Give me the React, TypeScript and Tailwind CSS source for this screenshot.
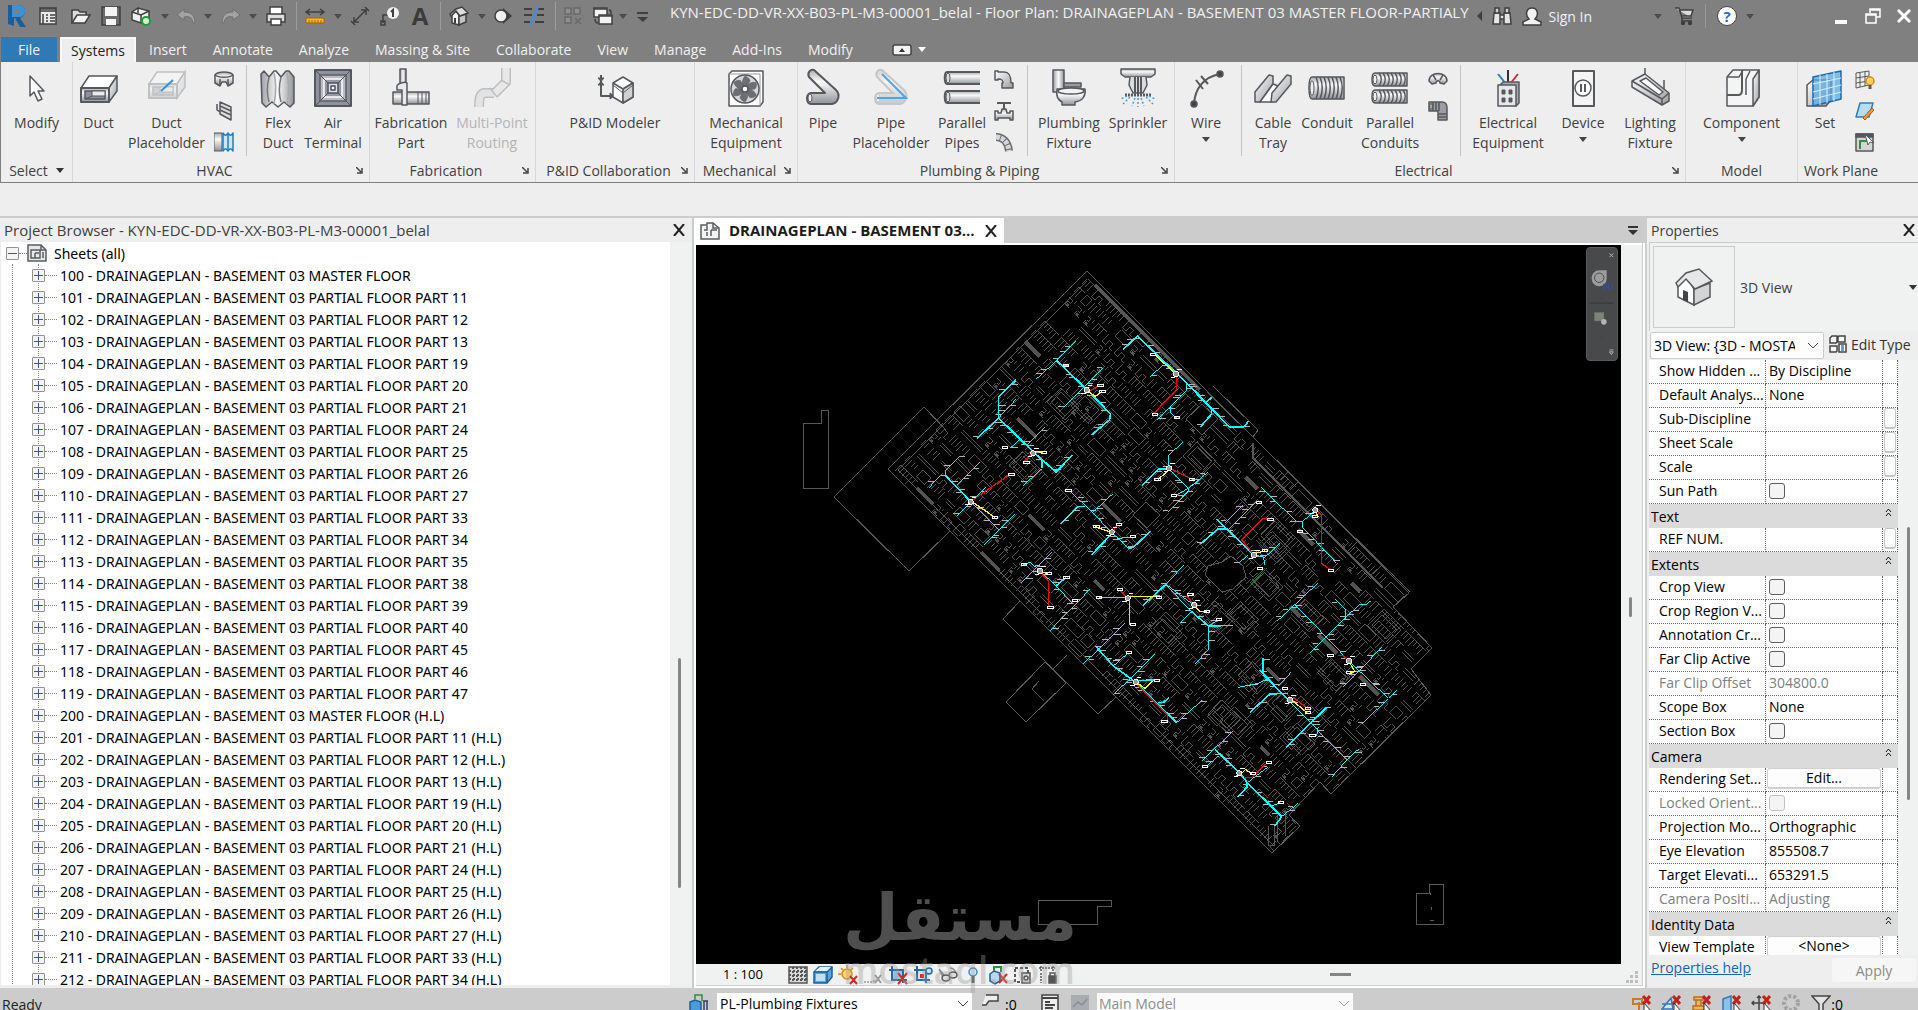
import { useState, type ReactNode } from "react";
import clsx from "clsx";

const Defs = () => (
  <svg className="absolute h-0 w-0" aria-hidden="true">
    <defs>
      <linearGradient id="metal" x1="0" y1="0" x2="0" y2="1">
        <stop offset="0" stopColor="#a9acb0" />
        <stop offset=".35" stopColor="#fafafa" />
        <stop offset="1" stopColor="#8f9398" />
      </linearGradient>
      <linearGradient id="metalH" x1="0" y1="0" x2="1" y2="0">
        <stop offset="0" stopColor="#9da1a6" />
        <stop offset=".5" stopColor="#fafafa" />
        <stop offset="1" stopColor="#8f9398" />
      </linearGradient>
      <linearGradient id="side" x1="0" y1="0" x2="1" y2="1">
        <stop offset="0" stopColor="#ffffff" />
        <stop offset="1" stopColor="#9b9ea3" />
      </linearGradient>
    </defs>
  </svg>
);

type IconProps = { children: ReactNode; size?: 20 | 40; dim?: boolean };

const Icon = ({ children, size = 40, dim }: IconProps) => (
  <svg
    viewBox={size === 40 ? "0 0 40 40" : "0 0 20 20"}
    className={clsx("shrink-0", size === 40 ? "h-10 w-10" : "h-5 w-5", dim && "opacity-50")}
    fill="none"
    stroke="#55585d"
    strokeWidth="1.5"
    strokeLinejoin="round"
    aria-hidden="true"
  >
    {children}
  </svg>
);

const Caret = ({ className = "text-[#444]" }: { className?: string }) => (
  <svg viewBox="0 0 8 5" className={clsx("h-[5px] w-2 shrink-0", className)} fill="currentColor" aria-hidden="true">
    <path d="M0 0h8L4 5z" />
  </svg>
);

/* ---------- large ribbon icons ---------- */

const ModifyIcon = () => (
  <Icon>
    <path d="M13 8v20l4-4 4 9 4-2-4-8h6z" fill="#fff" />
  </Icon>
);
const DuctBox = () => (
  <>
    <path d="M2 20l8-12h28l-8 12z" fill="#fff" />
    <path d="M30 20l8-12v15l-8 11z" fill="url(#side)" />
    <path d="M2 20h28v14H2z" fill="url(#metal)" strokeWidth="2" />
    <path d="M6 23h20v8H6z" fill="#8d90a0" />
    <path d="M13 23h13v5H13z" fill="#e9e9ee" strokeWidth="1" />
    <path d="M6 31l7-3" strokeWidth="1" />
  </>
);
const DuctIcon = () => (
  <Icon>
    <DuctBox />
  </Icon>
);
const DuctPlaceholderIcon = () => (
  <svg viewBox="0 0 40 40" className="h-10 w-10" aria-hidden="true">
    <g opacity=".3" fill="none" stroke="#55585d" strokeWidth="1.5" transform="translate(0 -4)">
      <DuctBox />
    </g>
    <path d="M14 23l12-11" stroke="#2f93e6" strokeWidth="2" />
  </svg>
);
const FlexDuctIcon = () => (
  <Icon>
    <path d="M3 6l3-3 5 6 5-6h2l5 6 5-6h3l5 6v26l-4 4-6-5-6 5-6-5-6 5-4-4z" fill="url(#metalH)" />
    <path d="M11 9c-2 8-2 18 0 25M23 9c-2 8-2 18 0 25" stroke="#777" />
    <path d="M16 5c2 9 2 21 0 31M29 5c2 9 2 21 0 31" stroke="#aaa" />
  </Icon>
);
const AirTerminalIcon = () => (
  <Icon>
    <path d="M2 2h36v36H2z" fill="#8f929a" strokeWidth="2" />
    <path d="M7 7h26v26H7z" fill="#b8bac0" stroke="#5b5e6a" />
    <path d="M11 11h18v18H11z" fill="#9497a4" stroke="#fff" />
    <path d="M15 15h10v10H15z" fill="#dcdde2" stroke="#4d505c" />
    <path d="M18 18h4v4h-4z" fill="#fff" stroke="#4d505c" />
    <path d="M2 2l13 13M38 2L25 15M2 38l13-13M38 38L25 25" stroke="#53565f" strokeWidth="1" />
  </Icon>
);
const FabricationIcon = () => (
  <Icon>
    <path d="M2 24h36v12H2z" fill="url(#metal)" />
    <path d="M27 24v12M31 24v12M35 24v12" strokeWidth="1" />
    <path d="M9 1h6v18H9z" fill="url(#metalH)" />
    <path d="M6 18c0-2 8-5 10-3v22h-5V22H6z" fill="#e9eaec" />
  </Icon>
);
const MultiPointIcon = () => (
  <Icon dim>
    <path d="M34 0v14L22 26" stroke="#8d9094" strokeWidth="10" />
    <path d="M22 25h-9c-4 0-6 3-6 14" stroke="#8d9094" strokeWidth="10" />
    <path d="M34 0v14L22 26" stroke="#e4e4e6" strokeWidth="7" />
    <path d="M22 25h-9c-4 0-6 3-6 14" stroke="#d8d9db" strokeWidth="7" />
    <path d="M18 20l7 9M29 12l9 5" stroke="#8d9094" />
  </Icon>
);
const PidIcon = () => (
  <Icon>
    <path d="M6 7v21h9" strokeWidth="2" />
    <path d="M3 10h6l-6 7h6zM15 25l4 3-4 3z" fill="#55585d" strokeWidth="1" />
    <path d="M28 9l10 6v14l-10 6-10-6V15z" fill="#fff" />
    <path d="M18 15l10 6 10-6M28 21v14" />
    <path d="M28 21l10-6v14l-10 6z" fill="#d0d1d3" />
    <path d="M18 17l10 8 10-8" strokeWidth="1" />
  </Icon>
);
const FanIcon = () => (
  <Icon>
    <path d="M3 6l3-3h31v31l-3 4H3z" fill="#fff" strokeWidth="1.5" />
    <path d="M3 6h31v32" strokeWidth="1" stroke="#999" />
    <circle cx="19" cy="21" r="14" fill="#d7d8da" />
    {[0, 60, 120, 180, 240, 300].map((a) => (
      <path key={a} d="M19 21c-4-4-3-10 0-13 3 1 5 3 5 5z" fill="#6b6e73" strokeWidth=".5" transform={`rotate(${a} 19 21)`} />
    ))}
    <circle cx="19" cy="21" r="3" fill="#fff" />
  </Icon>
);
const PipeShape = () => (
  <>
    <path d="M4 30c0-3 2-5 4-5h14L6 9c-2-4 1-8 5-7l22 20c5 5 2 13-4 14H8c-3 0-4-3-4-6z" fill="url(#metal)" strokeWidth="2" />
    <ellipse cx="7" cy="30" rx="2" ry="4" fill="#eee" strokeWidth="1" />
  </>
);
const PipeIcon = () => (
  <Icon>
    <PipeShape />
  </Icon>
);
const PipePlaceholderIcon = () => (
  <svg viewBox="0 0 40 40" className="h-10 w-10" aria-hidden="true">
    <g opacity=".4" fill="none" stroke="#8a8d92" strokeWidth="1.5">
      <PipeShape />
    </g>
    <path d="M11 6l24 24H6" fill="none" stroke="#4ba6ee" strokeWidth="2" />
  </svg>
);
const ParallelPipesIcon = () => (
  <Icon>
    <path d="M38 4H5c-3 0-3 12 0 12h33" fill="url(#metal)" strokeWidth="2" />
    <path d="M38 23H5c-3 0-3 12 0 12h33" fill="url(#metal)" strokeWidth="2" />
    <ellipse cx="6" cy="10" rx="2" ry="5" fill="#ddd" strokeWidth="1" />
    <ellipse cx="6" cy="29" rx="2" ry="5" fill="#ddd" strokeWidth="1" />
  </Icon>
);
const ToiletIcon = () => (
  <Icon>
    <path d="M4 2h11v22H4z" fill="url(#metalH)" />
    <path d="M15 15h17v4H15z" fill="#999da2" />
    <path d="M8 21h28c1 6-2 12-10 13v3h-13v-3c-4-2-6-7-5-13z" fill="url(#metal)" />
    <ellipse cx="22" cy="23" rx="13" ry="3" fill="#f3f3f3" />
  </Icon>
);
const SprinklerIcon = () => (
  <Icon>
    <path d="M3 1h34v5l-4 3H7L3 6z" fill="url(#metal)" />
    <path d="M12 9l-1 8 4 8h10l4-8-1-8" fill="#dcdddf" />
    <path d="M17 9v16M23 9v16M20 9v18" strokeWidth="2" />
    <path d="M7 27h26" strokeWidth="3" strokeDasharray="2 1" />
    <path d="M12 29L5 36M17 30l-3 8M20 30v9M23 30l3 8M28 29l7 7M9 28l-6 3M31 28l6 3" stroke="#4b9de0" strokeDasharray="2 2" />
  </Icon>
);
const WireIcon = () => (
  <Icon>
    <path d="M8 36C9 20 18 9 34 6" strokeWidth="2" />
    <circle cx="34" cy="6" r="3" fill="#444" />
    <circle cx="8" cy="36" r="3" fill="#444" />
    <path d="M10 12l7 9M15 8l7 8" strokeWidth="2" />
  </Icon>
);
const CableTrayIcon = () => (
  <Icon>
    <path d="M2 24L16 7l4 1v8L7 34H2z" fill="url(#side)" />
    <path d="M7 34l13-18 8 3-9 15z" fill="#fff" />
    <path d="M18 34l1-9L34 7l4 1v8L23 34z" fill="url(#side)" />
  </Icon>
);
const Coil = ({ y, h }: { y: number; h: number }) => (
  <g>
    <path d={`M5 ${y}h32v${h}H5c-4 0-4-${h} 0-${h}z`} fill="url(#metal)" />
    {[9, 13, 17, 21, 25, 29, 33].map((x) => (
      <path key={x} d={`M${x} ${y}c3 ${h / 3} 3 ${h / 1.5} 0 ${h}`} />
    ))}
    <ellipse cx="5" cy={y + h / 2} rx="2" ry={h / 3} fill="#eee" strokeWidth="1" />
  </g>
);
const ConduitIcon = () => (
  <Icon>
    <Coil y={9} h={22} />
  </Icon>
);
const ParallelConduitsIcon = () => (
  <Icon>
    <Coil y={5} h={13} />
    <Coil y={22} h={13} />
  </Icon>
);
const ElectricalIcon = () => (
  <Icon>
    <path d="M20 16V2" stroke="#333" strokeWidth="2" />
    <path d="M18 16L10 6" stroke="#2b7fd4" strokeWidth="2" />
    <path d="M22 16l8-10" stroke="#d12a2a" strokeWidth="2" />
    <path d="M12 17l3-3h16v21l-3 3z" fill="#a5a8ac" />
    <path d="M10 17h18v21H10z" fill="#e6e7e8" />
    <path d="M14 22h3v4h-3zM21 22h3v4h-3zM14 30h3v4h-3zM21 30h3v4h-3z" fill="#55585d" strokeWidth="1" />
  </Icon>
);
const DeviceIcon = () => (
  <Icon>
    <path d="M10 3h21v35H10z" fill="#f4f4f4" strokeWidth="2" />
    <circle cx="20" cy="20" r="8" fill="#fff" />
    <path d="M18 16v8M22 16v8" strokeWidth="2" />
  </Icon>
);
const LightingIcon = () => (
  <Icon>
    <path d="M15 0v10M34 12v12" />
    <path d="M2 13l13-7 24 19v8l-7 4L2 19z" fill="url(#side)" />
    <path d="M2 13l30 18 7-6M32 31v6" />
    <path d="M10 13l6-3 17 14-4 3z" fill="#fff" />
  </Icon>
);
const ComponentIcon = () => (
  <Icon>
    <path d="M5 9l6-7h26v27l-6 9H5z" fill="#f4f4f4" />
    <path d="M31 38V11l6-9v27z" fill="url(#side)" />
    <path d="M20 2v20c0 3-1 5-4 5H5" strokeWidth="2" />
    <path d="M24 11v16M5 9h12l4-7M24 11l4-8" />
  </Icon>
);
const SetIcon = () => (
  <Icon>
    <path d="M2 17l6-5h18v20l-5 6H2z" fill="url(#side)" />
    <path d="M8 9l28-6v28l-28 7z" fill="#5ba9e3" fillOpacity=".75" stroke="#1c6bb0" />
    <path d="M15 7v30M22 6v29M29 4v29M8 16l28-6M8 24l28-7M8 31l28-7" stroke="#d9efff" strokeWidth="1" />
  </Icon>
);

/* ---------- small ribbon icons ---------- */

const DuctFittingIcon = () => (
  <Icon size={20}>
    <path d="M1 5c3-4 15-4 18 0v8l-5 3-2-4H8l-2 4-5-3z" fill="url(#metal)" />
    <path d="M1 5c3 3 15 3 18 0M6 9v6M14 9v6" />
  </Icon>
);
const DuctAccessoryIcon = () => (
  <Icon size={20}>
    <path d="M3 3v6l3 2M6 1l11 5v13L6 13z" fill="#ddd" />
    <path d="M6 5l11 5M6 9l11 5" />
  </Icon>
);
const ConvertFlexIcon = () => (
  <Icon size={20}>
    <path d="M0 1h8v18H0z" fill="url(#metal)" strokeWidth="1" />
    <path d="M9 1c2 3 3 3 5 0 2 3 3 3 5 0v18c-2-3-3-3-5 0-2-3-3-3-5 0z" fill="#cfe6f8" stroke="#1f7cc4" />
    <path d="M14 2v16" stroke="#1f7cc4" />
  </Icon>
);
const ElbowIcon = () => (
  <Icon size={20}>
    <path d="M1 1h3v1h6c5 0 7 3 7 11h2v5H8v-5h1c0-3-1-4-5-4v1H1z" fill="url(#side)" />
  </Icon>
);
const ValveIcon = () => (
  <Icon size={20}>
    <path d="M3 2h14M10 2v6" strokeWidth="2" />
    <path d="M1 10h3v2h3l1-4h4l1 4h3v-2h3v9h-3v-2H4v2H1z" fill="url(#metal)" />
  </Icon>
);
const FlexPipeIcon = () => (
  <Icon size={20}>
    <path d="M2 5c7 0 12 5 13 14" stroke="#6b6e73" strokeWidth="8" />
    <path d="M2 5c7 0 12 5 13 14" stroke="#d7d8da" strokeWidth="5" strokeDasharray="4 1" />
  </Icon>
);
const ConduitFittingIcon = () => (
  <Icon size={20}>
    <path d="M1 11C1 1 19 1 19 11l-3 3-4-1c0-3-4-3-4 0l-4 1z" fill="url(#metal)" />
    <path d="M5 5l3 5M15 5l-3 5" />
  </Icon>
);
const ConduitElbowIcon = () => (
  <Icon size={20}>
    <path d="M1 1h13c4 0 5 3 5 6v12h-9v-9H1z" fill="#9b9ea2" />
    <path d="M5 1v9M8 1v9M11 1v9M10 13h9M10 16h9" />
    <path d="M2 3h2v5H2z" fill="#eee" strokeWidth="1" />
  </Icon>
);
const ShowPlaneIcon = () => (
  <Icon size={20}>
    <path d="M1 3l13-2v14L1 18zM5 3v14M10 2v14M1 8l13-2M1 13l13-2" strokeWidth="1" />
    <circle cx="15" cy="11" r="4" fill="#ffd35c" stroke="#e18a1b" />
    <path d="M15 15v4" strokeWidth="3" />
  </Icon>
);
const RefPlaneIcon = () => (
  <Icon size={20}>
    <path d="M5 2h13l-4 14H1z" fill="#b9dcf5" stroke="#2f7dc1" />
    <path d="M8 17l9-10 2 2-9 10z" fill="#ee9b3f" stroke="#a55a12" strokeWidth="1" />
  </Icon>
);
const ViewerIcon = () => (
  <Icon size={20}>
    <path d="M1 2h17v17H1z" fill="#d5d5d5" />
    <path d="M1 2h17v3H1z" fill="#555" />
    <path d="M5 17V9h8" stroke="#2f8f3a" strokeWidth="2" />
    <path d="M10 2l3 11 2-3 4 1z" fill="#fff" strokeWidth="1" />
  </Icon>
);

/* ---------- title bar ---------- */

const Q = ({ children }: { children: ReactNode }) => (
  <svg viewBox="0 0 20 20" className="h-5 w-5 shrink-0" fill="none" stroke="#3f3f3f" strokeWidth="1.5" aria-hidden="true">
    {children}
  </svg>
);

const RevitLogo = () => (
  <svg viewBox="0 0 20 24" className="h-6 w-5" aria-hidden="true">
    <path d="M1 1h10c5 0 7 3 7 6 0 4-2 6-5 7l6 9h-6L8 14H7v8l-6-2z" fill="#1b5e9e" />
    <path d="M1 1h10c5 0 7 3 7 6 0 4-2 6-7 6H5V1z" fill="#3d92d6" />
    <path d="M7 5h4c3 0 3 4 0 4H7z" fill="#808080" />
  </svg>
);

type QatItem = { name: string; width: string; icon?: ReactNode; kind?: "caret" | "sep" };

const qat: QatItem[] = [
  { name: "Revit", width: "w-[34px]", icon: <RevitLogo /> },
  {
    name: "Home",
    width: "w-[27px]",
    icon: (
      <Q>
        <path d="M2 2h16v16H2z" fill="#e8e8e8" />
        <path d="M2 3h16M2 5h16" />
        <path d="M5 8v10M8 9h2M12 9h5M8 12h2M12 12h5M8 15h2M12 15h5" />
      </Q>
    ),
  },
  {
    name: "Open",
    width: "w-10",
    icon: (
      <Q>
        <path d="M1 17V4h6l2 2h6v3" fill="#ddd" />
        <path d="M1 17L6 9h13l-5 8z" fill="#f2f2f2" />
      </Q>
    ),
  },
  {
    name: "Save",
    width: "w-5",
    icon: (
      <Q>
        <path d="M1 1h18v18H1z" fill="#6b6b6b" />
        <path d="M4 1h12v9H4zM5 13h10v6H5z" fill="#f4f4f4" stroke="none" />
      </Q>
    ),
  },
  {
    name: "Synchronize",
    width: "w-10",
    icon: (
      <Q>
        <path d="M1 6l6-4 11 3v8l-8 4-9-3z" fill="#eee" />
        <path d="M1 6l9 3 8-4M10 9v8M7 2v5" />
        <circle cx="15" cy="15" r="4" fill="#d6f0d6" stroke="#1f9a35" strokeWidth="2" />
      </Q>
    ),
  },
  { name: "Synchronize options", width: "w-2", kind: "caret" },
  {
    name: "Undo",
    width: "w-[34px]",
    icon: (
      <Q>
        <path d="M8 3L1 9l7 5v-3c5-1 8 0 9 6h2c0-8-4-11-11-11z" fill="#a3a3a3" stroke="#6f6f6f" strokeWidth="1" />
      </Q>
    ),
  },
  { name: "Undo list", width: "w-[10px]", kind: "caret" },
  {
    name: "Redo",
    width: "w-9",
    icon: (
      <Q>
        <path d="M12 3l7 6-7 5v-3c-5-1-8 0-9 6H1c0-8 4-11 11-11z" fill="#a3a3a3" stroke="#6f6f6f" strokeWidth="1" />
      </Q>
    ),
  },
  { name: "Redo list", width: "w-2", kind: "caret" },
  {
    name: "Print",
    width: "w-[38px]",
    icon: (
      <Q>
        <path d="M4 1h12v8H4z" fill="#fff" />
        <path d="M1 8h18v8H1z" fill="#ddd" />
        <path d="M5 13h10v6H5z" fill="#fff" />
      </Q>
    ),
  },
  { name: "s1", width: "w-[2px]", kind: "sep" },
  {
    name: "Measure",
    width: "w-9",
    icon: (
      <Q>
        <path d="M1 6h18M5 3L1 6l4 3M15 3l4 3-4 3" />
        <path d="M1 12h18v5H1z" fill="#ffb32c" stroke="#a56400" strokeWidth="1" />
        <path d="M4 14v3M7 14v3M10 14v3M13 14v3M16 14v3" stroke="#a56400" strokeWidth="1" />
      </Q>
    ),
  },
  { name: "Measure options", width: "w-[10px]", kind: "caret" },
  {
    name: "Aligned Dimension",
    width: "w-[34px]",
    icon: (
      <Q>
        <path d="M4 16L16 4M4 11v5h5M11 4h5v5M1 15l4 4M15 1l4 4" />
      </Q>
    ),
  },
  {
    name: "Tag by Category",
    width: "w-[26px]",
    icon: (
      <Q>
        <path d="M3 17V9h5M1 15h4v4H1z" />
        <circle cx="13" cy="7" r="6" fill="#f2f2f2" stroke="none" />
        <path d="M11 6l2-2v7" strokeWidth="2" />
      </Q>
    ),
  },
  {
    name: "Text",
    width: "w-[34px]",
    icon: <span className="text-[24px] font-bold leading-6 text-[#3b3b3b]">A</span>,
  },
  { name: "s2", width: "w-[6px]", kind: "sep" },
  {
    name: "Default 3D View",
    width: "w-[31px]",
    icon: (
      <Q>
        <path d="M3 9v8l7 2V9l-3-4z" fill="#f4f4f4" />
        <path d="M10 10l7-2v8l-7 3z" fill="#c4c4c4" />
        <path d="M1 8l6-5 6-2 6 6-8 3-4-5-5 5z" fill="#dedede" />
        <path d="M5 12h2v5H5z" fill="#3f3f3f" stroke="none" />
      </Q>
    ),
  },
  { name: "3D options", width: "w-4", kind: "caret" },
  {
    name: "Section",
    width: "w-[26px]",
    icon: (
      <Q>
        <path d="M10 2l9 8-9 8z" fill="#3f3f3f" stroke="none" />
        <circle cx="8" cy="10" r="6" fill="#f0f0f0" />
      </Q>
    ),
  },
  {
    name: "Thin Lines",
    width: "w-9",
    icon: (
      <Q>
        <path d="M0 3h8M13 3h7M0 9h8M13 9h7M0 16h6M11 16h9" strokeWidth="2" />
        <path d="M14 1L6 19" stroke="#3d8fe0" strokeWidth="2" />
      </Q>
    ),
  },
  { name: "s3", width: "w-[6px]", kind: "sep" },
  {
    name: "Close Inactive Views",
    width: "w-[30px]",
    icon: (
      <Q>
        <path d="M2 2h6v6H2zM11 2h6v6h-6zM2 11h6v6H2z" fill="#8f8f8f" stroke="#696969" />
        <path d="M12 12l6 6M18 12l-6 6" stroke="#696969" />
      </Q>
    ),
  },
  {
    name: "Switch Windows",
    width: "w-[30px]",
    icon: (
      <Q>
        <path d="M1 2h13v9H1z" fill="#f2f2f2" />
        <path d="M6 9h13v9H6z" fill="#f2f2f2" />
        <path d="M1 3h13M6 10h13M16 4c2 0 2 1 2 4M2 13c0 3 1 4 3 4" />
      </Q>
    ),
  },
  { name: "Window list", width: "w-[10px]", kind: "caret" },
  {
    name: "Customize Quick Access Toolbar",
    width: "w-7",
    icon: (
      <Q>
        <path d="M5 7h11" strokeWidth="2" />
        <path d="M5 11h11l-5 5z" fill="#3f3f3f" stroke="none" />
      </Q>
    ),
  },
];

const TitleBar = () => (
  <header className="flex h-[37px] items-start bg-[#808080]">
    <div className="flex h-8 shrink-0 items-center">
      {qat.map((item) =>
        item.kind === "sep" ? (
          <span key={item.name} className={clsx("flex h-7 justify-center", item.width)}>
            <span className="w-px bg-[#9c9c9c]" />
          </span>
        ) : (
          <button key={item.name} aria-label={item.name} className={clsx("flex h-8 shrink-0 items-center justify-center", item.width)}>
            {item.kind === "caret" ? <Caret className="text-[#4c4c4c]" /> : item.icon}
          </button>
        ),
      )}
    </div>
    <h1 className="ml-[14px] min-w-0 flex-1 whitespace-nowrap text-[15px] leading-6 text-[#f0f0f0]">
      KYN-EDC-DD-VR-XX-B03-PL-M3-00001_belal - Floor Plan: DRAINAGEPLAN - BASEMENT 03 MASTER FLOOR-PARTIALY
    </h1>
    <div className="flex h-8 shrink-0 items-center">
      <button aria-label="Collapse search" className="mr-[10px]">
        <svg viewBox="0 0 5 10" className="h-[10px] w-[5px]" fill="#3f3f3f">
          <path d="M5 0v10L0 5z" />
        </svg>
      </button>
      <button aria-label="Search" className="mr-[10px]">
        <Q>
          <path d="M2 7h6v11H1zM12 7h6l1 11h-7zM8 9h4v4H8z" fill="#e6e6e6" />
          <path d="M3 2h4v5H3zM13 2h4v5h-4z" fill="#cfcfcf" />
        </Q>
      </button>
      <button className="flex items-center text-[14px] text-[#f0f0f0]">
        <span className="mr-[6px]">
          <Q>
            <path d="M1 19v-3l6-3c-4-4-3-11 3-11s7 7 3 11l6 3v3z" fill="#f2f2f2" />
          </Q>
        </span>
        Sign In
      </button>
      <button aria-label="Account options" className="ml-[62px] mr-3">
        <Caret className="text-[#4c4c4c]" />
      </button>
      <button aria-label="App Store">
        <Q>
          <path d="M1 2h4l3 10h10M6 4h13l-2 6H7" fill="#dcdcdc" />
          <path d="M8 12v3h10" />
          <circle cx="9" cy="17" r="1.5" fill="#2c3c66" />
          <circle cx="16" cy="17" r="1.5" fill="#2c3c66" />
        </Q>
      </button>
      <span className="mx-[11px] h-6 w-px bg-[#979797]" />
      <button
        aria-label="Help"
        className="flex h-5 w-5 items-center justify-center rounded-full border border-[#444] bg-white text-[15px] font-bold leading-4 text-[#1d6fc0]"
      >
        ?
      </button>
      <button aria-label="Help options" className="ml-[9px] mr-[81px]">
        <Caret className="text-[#4c4c4c]" />
      </button>
      <button aria-label="Minimize" className="mr-[18px] mt-3 h-1 w-3 bg-white" />
      <button aria-label="Restore" className="mr-4">
        <svg viewBox="0 0 16 16" className="h-4 w-4" fill="none" stroke="#fff" strokeWidth="1.5">
          <path d="M5 5V1h10v8h-4M1 6h10v9H1zM1 7h10M5 2h10" />
        </svg>
      </button>
      <button aria-label="Close window" className="mr-[7px]">
        <svg viewBox="0 0 14 14" className="h-[14px] w-[14px]" stroke="#fff" strokeWidth="3">
          <path d="M1 1l12 12M13 1L1 13" />
        </svg>
      </button>
    </div>
  </header>
);

const menu = ["Insert", "Annotate", "Analyze", "Massing & Site", "Collaborate", "View", "Manage", "Add-Ins", "Modify"];

const Tabs = () => (
  <nav className="flex h-[25px] items-stretch bg-[#808080] text-[14px] text-[#f0f0f0]">
    <button className="ml-px w-14 bg-[#2d7ab6]">File</button>
    <button className="ml-[3px] w-[76px] border-2 border-b-0 border-[#f8f8f8] bg-[#eee] text-[#222]">Systems</button>
    {menu.map((item) => (
      <button key={item} className="px-[13px]">
        {item}
      </button>
    ))}
    <button aria-label="Minimize ribbon" className="ml-[26px] flex items-center gap-[6px]">
      <svg viewBox="0 0 20 12" className="h-3 w-5">
        <rect x="1" y="1" width="18" height="10" rx="2" fill="#f2f2f2" stroke="#444" strokeWidth="1.5" />
        <path d="M7 8h6l-3-4z" fill="#333" />
      </svg>
      <Caret className="text-white" />
    </button>
  </nav>
);

/* ---------- ribbon ---------- */

type ToolProps = { icon: ReactNode; lines: string[]; width: string; menu?: boolean; disabled?: boolean };

const Tool = ({ icon, lines, width, menu, disabled }: ToolProps) => (
  <button disabled={disabled} className={clsx("flex shrink-0 flex-col items-center pt-[6px] text-[#404040] disabled:text-[#b4b4b4]", width)}>
    {icon}
    <span className="mt-[5px] flex flex-col items-center whitespace-nowrap leading-5">
      {lines.map((line) => (
        <span key={line}>{line}</span>
      ))}
    </span>
    {menu && (
      <span className="mt-1">
        <Caret />
      </span>
    )}
  </button>
);

const SmallTools = ({ items, className }: { items: [string, ReactNode][]; className: string }) => (
  <div className={clsx("flex shrink-0 flex-col items-center gap-[11px] pt-2", className)}>
    {items.map(([name, icon]) => (
      <button key={name} aria-label={name}>
        {icon}
      </button>
    ))}
  </div>
);

const Divider = ({ className }: { className: string }) => <span className={clsx("my-[3px] w-px shrink-0 bg-[#c4c4c4]", className)} />;

type PanelProps = { title: string; width: string; launcher?: boolean; dropdown?: boolean; children: ReactNode };

const Panel = ({ title, width, launcher, dropdown, children }: PanelProps) => (
  <section className={clsx("flex flex-col border-r border-[#d8d8d8]", width)}>
    <div className="flex h-[97px] items-stretch">{children}</div>
    <div className="flex flex-1 items-center whitespace-nowrap text-[#404040]">
      <h2 className="flex flex-1 items-center justify-center">
        {title}
        {dropdown && (
          <span className="ml-2">
            <Caret className="text-[#333]" />
          </span>
        )}
      </h2>
      {launcher && (
        <button aria-label={`${title} settings`} className="mr-[6px]">
          <svg viewBox="0 0 7 7" className="h-[7px] w-[7px]" stroke="#444" strokeWidth="1.5" fill="none">
            <path d="M0 0l5 5M6 1v5H1" />
          </svg>
        </button>
      )}
    </div>
  </section>
);

const Ribbon = () => (
  <div className="flex h-[121px] shrink-0 border-b border-[#808080] bg-[#eee] text-[14px]">
    <Panel title="Select" width="w-[73px] border-l border-l-[#808080]" dropdown>
      <Tool icon={<ModifyIcon />} lines={["Modify"]} width="w-full" />
    </Panel>
    <Panel title="HVAC" width="w-[297px]" launcher>
      <Tool icon={<DuctIcon />} lines={["Duct"]} width="w-[51px]" />
      <Tool icon={<DuctPlaceholderIcon />} lines={["Duct", "Placeholder"]} width="w-[85px]" />
      <SmallTools
        className="w-[30px]"
        items={[
          ["Duct Fitting", <DuctFittingIcon />],
          ["Duct Accessory", <DuctAccessoryIcon />],
          ["Convert to Flex Duct", <ConvertFlexIcon />],
        ]}
      />
      <Divider className="ml-[7px] mr-1" />
      <Tool icon={<FlexDuctIcon />} lines={["Flex", "Duct"]} width="w-[54px]" />
      <Tool icon={<AirTerminalIcon />} lines={["Air", "Terminal"]} width="w-14" />
    </Panel>
    <Panel title="Fabrication" width="w-[166px]" launcher>
      <Tool icon={<FabricationIcon />} lines={["Fabrication", "Part"]} width="w-[82px]" />
      <Tool icon={<MultiPointIcon />} lines={["Multi-Point", "Routing"]} width="w-20" disabled />
    </Panel>
    <Panel title="P&ID Collaboration" width="w-[159px]" launcher>
      <Tool icon={<PidIcon />} lines={["P&ID Modeler"]} width="w-full" />
    </Panel>
    <Panel title="Mechanical" width="w-[103px]" launcher>
      <Tool icon={<FanIcon />} lines={["Mechanical", "Equipment"]} width="w-full" />
    </Panel>
    <Panel title="Plumbing & Piping" width="w-[377px]" launcher>
      <Tool icon={<PipeIcon />} lines={["Pipe"]} width="w-[50px]" />
      <Tool icon={<PipePlaceholderIcon />} lines={["Pipe", "Placeholder"]} width="w-[86px]" />
      <Tool icon={<ParallelPipesIcon />} lines={["Parallel", "Pipes"]} width="w-14" />
      <SmallTools
        className="w-7"
        items={[
          ["Pipe Fitting", <ElbowIcon />],
          ["Pipe Accessory", <ValveIcon />],
          ["Flex Pipe", <FlexPipeIcon />],
        ]}
      />
      <Divider className="ml-[9px] mr-1" />
      <Tool icon={<ToiletIcon />} lines={["Plumbing", "Fixture"]} width="w-[74px]" />
      <Tool icon={<SprinklerIcon />} lines={["Sprinkler"]} width="w-16" />
    </Panel>
    <Panel title="Electrical" width="w-[511px]" launcher>
      <Tool icon={<WireIcon />} lines={["Wire"]} width="w-[62px]" menu />
      <Divider className="ml-1 mr-1" />
      <Tool icon={<CableTrayIcon />} lines={["Cable", "Tray"]} width="w-[54px]" />
      <Tool icon={<ConduitIcon />} lines={["Conduit"]} width="w-[54px]" />
      <Tool icon={<ParallelConduitsIcon />} lines={["Parallel", "Conduits"]} width="w-[72px]" />
      <SmallTools
        className="w-6"
        items={[
          ["Conduit Fitting", <ConduitFittingIcon />],
          ["Conduit Elbow", <ConduitElbowIcon />],
        ]}
      />
      <Divider className="ml-[10px] mr-1" />
      <Tool icon={<ElectricalIcon />} lines={["Electrical", "Equipment"]} width="w-[86px]" />
      <Tool icon={<DeviceIcon />} lines={["Device"]} width="w-16" menu />
      <Tool icon={<LightingIcon />} lines={["Lighting", "Fixture"]} width="w-[70px]" />
    </Panel>
    <Panel title="Model" width="w-28">
      <Tool icon={<ComponentIcon />} lines={["Component"]} width="w-full" menu />
    </Panel>
    <Panel title="Work Plane" width="w-[86px] border-r-0">
      <Tool icon={<SetIcon />} lines={["Set"]} width="w-[54px]" />
      <SmallTools
        className="w-[26px]"
        items={[
          ["Show work plane", <ShowPlaneIcon />],
          ["Reference plane", <RefPlaneIcon />],
          ["Viewer", <ViewerIcon />],
        ]}
      />
    </Panel>
  </div>
);

/* ---------- project browser ---------- */

const parts = [11, 12, 13, 19, 20, 21, 24, 25, 26, 27, 33, 34, 35, 38, 39, 40, 45, 46, 47];

const sheets = [
  "100 - DRAINAGEPLAN - BASEMENT 03 MASTER FLOOR",
  ...parts.map((part, i) => `${101 + i} - DRAINAGEPLAN - BASEMENT 03 PARTIAL FLOOR PART ${part}`),
  "200 - DRAINAGEPLAN - BASEMENT 03 MASTER FLOOR (H.L)",
  ...parts.slice(0, 12).map(
    (part, i) => `${201 + i} - DRAINAGEPLAN - BASEMENT 03 PARTIAL FLOOR PART ${part} (${part === 12 && i === 1 ? "H.L." : "H.L"})`,
  ),
];

const CloseIcon = () => (
  <svg viewBox="0 0 12 12" className="h-3 w-3" stroke="#222" strokeWidth="2" aria-hidden="true">
    <path d="M1 0l10 12M11 0L1 12" />
  </svg>
);

const Expander = ({ open }: { open?: boolean }) => (
  <button
    aria-label={open ? "Collapse" : "Expand"}
    className="z-10 flex h-[13px] w-[13px] shrink-0 items-center justify-center rounded-[1px] border border-[#919191] bg-[#f4f4f4]"
  >
    <svg viewBox="0 0 9 9" className="h-[9px] w-[9px]" stroke="#3a55a4">
      <path d={open ? "M0 4.5h9" : "M0 4.5h9M4.5 0v9"} />
    </svg>
  </button>
);

const ProjectBrowser = () => (
  <aside className="flex w-[694px] shrink-0 flex-col border-r-2 border-[#ccc] bg-[#eee]">
    <div className="flex h-6 shrink-0 items-center justify-between pl-1 pr-[7px] text-[15px] text-[#404040]">
      <h2>Project Browser - KYN-EDC-DD-VR-XX-B03-PL-M3-00001_belal</h2>
      <button aria-label="Close project browser">
        <CloseIcon />
      </button>
    </div>
    <div className="mb-[3px] ml-px flex min-h-0 flex-1 overflow-hidden">
      <ul className="min-w-0 flex-1 overflow-hidden bg-white font-['Noto_Sans',sans-serif] text-[14px] text-black">
        <li className="flex h-[22px] items-center pl-[5px]">
          <Expander open />
          <span className="w-2 border-t border-dotted border-[#888]" />
          <svg viewBox="0 0 20 18" className="h-[18px] w-5" fill="none" stroke="#5a5d60" strokeWidth="1.5" aria-hidden="true">
            <path d="M1 1h13l5 5v11H1z" fill="#e6e8e8" />
            <path d="M4 6h9v8H4zM8 9h4M8 9v5M14 1v5h5M16 8v6" />
          </svg>
          <span className="ml-[7px]">Sheets (all)</span>
        </li>
        <li className="ml-[11px] border-l border-dotted border-[#888]">
          <ul className="ml-[25px] border-l border-dotted border-[#888]">
            {sheets.map((sheet) => (
              <li key={sheet} className="-ml-[7px] flex h-[22px] items-center">
                <Expander />
                <span className="w-3 border-t border-dotted border-[#888]" />
                <span className="ml-[3px] whitespace-nowrap">{sheet}</span>
              </li>
            ))}
          </ul>
        </li>
      </ul>
      <div className="relative w-[22px] bg-[#f0f1f1]">
        <span className="absolute left-2 top-[56%] h-[31%] w-[3px] rounded-full bg-[#858585]" />
      </div>
    </div>
  </aside>
);

/* ---------- drawing area ---------- */

// small deterministic generator so the plan looks the same on every render
const rng = (seed: number) => () => {
  seed = (seed * 1664525 + 1013904223) % 4294967296;
  return seed / 4294967296;
};

// wall and fixture line work in the building's own axes: u along its length, v across
const planWalls = () => {
  const r = rng(77);
  const thin: string[] = [];
  const thick: string[] = [];
  for (let v = 5; v < 300; v += 12) {
    let u = 6;
    const solidRow = Math.round(v / 12) % 5 === 2;
    while (u < 640) {
      const k = r();
      if (k < 0.4) {
        const n = 2 + Math.floor(r() * 6);
        for (let i = 0; i < n; i++) thin.push(`M${u + i * 4} ${v}v${6 + Math.floor(r() * 5)}`);
        if (r() < 0.6) thin.push(`M${u} ${v}h${n * 4}`);
        u += n * 4 + 3;
      } else if (k < 0.5) {
        const w = 6 + Math.floor(r() * 14);
        thin.push(`M${u} ${v}h${w}v9h${-w}z`);
        u += w + 4;
      } else if (k < 0.62) {
        thin.push(`M${u} ${v}v10h5v-6h5v6h4`);
        u += 17;
      } else if (k < 0.72) {
        const w = 10 + Math.floor(r() * 20);
        thin.push(`M${u} ${v + 3}h${w}M${u} ${v + 6}h${w}`);
        if (solidRow) thick.push(`M${u} ${v + 5}h${w}`);
        u += w + 3;
      } else if (k < 0.88) {
        thin.push(`M${u} ${v + 2}h5v4h-3v4h6M${u + 8} ${v}v4`);
        thick.push(`M${u + 3} ${v + 9}h3`);
        u += 13;
      } else {
        u += 4 + Math.floor(r() * 10);
      }
    }
  }
  for (let i = 0; i < 18; i++) {
    const u = Math.round(20 + r() * 540);
    const v = Math.round(20 + r() * 230);
    thin.push(`M${u} ${v}h26v20h-26zM${u + 3} ${v + 3}h20v14h-20z`);
  }
  return { thin: thin.join(""), thick: thick.join("") };
};

type Pt = [number, number];
type Zone = {
  x: number;
  y: number;
  pipes: string[];
  mains: string[];
  red: string[];
  yellow: string[];
  nodes: Pt[];
  tags: Pt[];
};

// three zones, each in thirds of a pixel from its own origin
const zones: Zone[] = [
  {
    x: 780,
    y: 240,
    mains: [
      "830,362 920,448 992,522 988,540 935,585",
      "656,534 760,636 828,696 878,645",
      "708,420 656,470 656,534 590,596",
      "496,706 572,785",
      "1030,328 1072,288 1190,400 1260,468",
      "1166,685 1135,688 1085,737",
      "915,800 893,800 842,852",
      "995,882 935,944",
      "1045,925 1060,922 1112,873",
      "787,660 787,685",
      "1158,1033 1088,1097",
      "828,1038 858,1012",
    ],
    pipes: [
      "890,302 830,362 768,418",
      "970,382 852,500",
      "708,478 656,534",
      "795,560 740,615",
      "720,598 690,625",
      "787,685 728,738",
      "538,650 498,690 496,706 482,706 445,745",
      "572,785 656,868",
      "600,665 530,735",
      "618,740 530,828",
      "706,820 612,914",
      "1150,375 1110,410",
      "1220,430 1220,450 1132,540",
      "1172,498 1172,520 1190,534",
      "1208,608 1166,645 1166,685 1225,745 1190,765",
      "1260,718 1225,745 1225,755 1165,815",
      "870,752 937,818 995,877 1045,925",
      "937,818 998,762",
      "1010,895 1060,892",
      "818,935 725,1028",
      "730,975 750,966 780,993 828,1038 880,1093",
      "930,1048 810,1172",
      "1212,975 1158,1033 1245,1098",
      "958,1072 1040,1073",
    ],
    red: [
      "1190,405 1190,448 1122,520",
      "1170,685 1235,718",
      "575,782 690,703",
      "780,995 806,1025 806,1102",
      "925,455 960,436",
      "730,665 757,640",
      "995,877 1012,855",
      "1020,1052 1043,1075",
    ],
    yellow: [
      "1125,345 1188,402",
      "925,452 945,470 965,455",
      "575,785 645,832",
      "760,635 790,636",
      "945,860 995,877",
      "1168,688 1135,718",
      "1050,1070 1140,1070",
      "785,995 805,1002",
    ],
    nodes: [[572, 785], [760, 640], [920, 450], [1188, 402], [1167, 685], [995, 877], [780, 993], [1043, 1075]],
    tags: [
      [858, 376], [962, 436], [968, 455], [675, 622], [793, 637], [740, 668], [695, 703], [645, 832], [1120, 343],
      [1126, 523], [1192, 534], [1237, 718], [1133, 720], [1182, 766], [866, 752], [1018, 853], [950, 860], [1060, 890],
      [732, 975], [807, 1000], [860, 1012], [812, 1103], [886, 1081], [958, 1072], [1138, 1072], [1020, 1050], [1232, 1064],
    ],
  },
  {
    x: 1100,
    y: 320,
    mains: [
      "260,190 390,322 432,320 446,303",
      "335,232 318,248",
      "335,265 335,282 302,320",
      "350,598 462,705",
      "385,626 352,628 302,672",
      "608,605 608,622",
    ],
    pipes: [
      "483,502 590,605 608,605 608,622 710,730",
      "645,570 608,605",
      "462,705 495,712 540,670",
      "375,610 430,555",
      "385,628 470,545",
      "445,705 418,728",
      "490,712 495,735",
      "325,455 265,505 265,513 205,575",
    ],
    red: ["650,572 665,585 665,730 692,750", "462,705 425,660 488,596 510,597"],
    yellow: ["465,700 495,693", "648,575 655,592"],
    nodes: [[646, 571], [462, 705]],
    tags: [[478, 547], [512, 598], [645, 590], [600, 636], [495, 693], [480, 745], [694, 751]],
  },
  {
    x: 1000,
    y: 560,
    mains: [
      "575,155 626,198 700,196",
      "626,198 626,268",
      "290,262 340,318 405,365 530,488",
      "475,428 490,428 508,412",
      "410,362 465,360",
      "790,295 790,340",
      "778,330 870,425",
      "850,400 810,402 750,457",
      "980,442 858,562",
      "645,568 720,640 742,668 845,770",
      "742,668 742,680 712,712",
      "845,770 825,798",
    ],
    pipes: [
      "498,75 575,155 540,190",
      "626,198 655,180",
      "626,268 585,312",
      "375,190 250,312",
      "530,488 605,422",
      "340,318 385,278",
      "465,283 385,362 338,405",
      "870,425 1040,600 1078,565",
      "803,357 775,370 715,382",
      "875,335 835,378",
      "1040,600 995,652",
      "955,500 950,528",
      "955,68 830,185",
      "886,135 978,230 1047,303 1075,330 1165,415 1190,390",
      "1165,415 1087,492",
      "1148,260 1030,380",
      "1112,123 1098,135 1078,133 930,278",
      "1005,118 1037,148 1037,178",
      "698,515 605,603",
      "845,770 895,730",
      "657,587 620,618",
      "742,668 805,620",
      "815,738 840,728",
    ],
    red: [
      "410,372 502,465 502,480",
      "560,108 583,135",
      "880,412 925,447",
      "1015,287 1030,287 1047,303",
      "800,610 755,652 735,652",
    ],
    yellow: [
      "410,368 435,385 460,362",
      "585,140 600,155 622,155",
      "875,420 920,457",
      "1047,305 1065,335 1050,338",
      "725,640 737,628 755,642",
    ],
    nodes: [[407, 366], [583, 135], [870, 420], [1047, 303], [718, 640]],
    tags: [
      [360, 90], [478, 112], [400, 195], [570, 103], [622, 155], [657, 178], [388, 277], [472, 362], [494, 484],
      [855, 387], [925, 445], [925, 457], [938, 528], [992, 287], [1047, 338], [1090, 375], [615, 620], [808, 609],
      [760, 640], [843, 728],
    ],
  },
];

// pipe size labels read as short level dashes beside each run
const labelDashes = (lines: string[]) => {
  const r = rng(lines.length * 31);
  let d = "";
  lines.forEach((line) => {
    const pts = line.split(" ").map((p) => p.split(",").map(Number));
    for (let i = 1; i < pts.length; i++) {
      const [x0, y0] = pts[i - 1];
      const [x1, y1] = pts[i];
      const n = Math.floor(Math.hypot(x1 - x0, y1 - y0) / 28);
      for (let j = 0; j < n; j++) {
        const t = (j + r()) / n;
        const side = r() < 0.5 ? -18 : 1;
        d += `M${Math.round(x0 + (x1 - x0) * t + side)} ${Math.round(y0 + (y1 - y0) * t)}h${15 + Math.floor(r() * 6)}`;
      }
    }
  });
  return d;
};

const walls = planWalls();
const building =
  "1087,271 1409,593 1393,607 1432,648 1411,669 1431,695 1331,794 1320,782 1289,815 1300,826 1272,853 888,469";

const FloorPlan = () => (
  <svg
    viewBox="696 245 925 719"
    preserveAspectRatio="xMidYMid meet"
    className="h-full w-full"
    fill="none"
    stroke="#585858"
    shapeRendering="crispEdges"
    role="img"
    aria-label="Drainage floor plan"
  >
    <clipPath id="footprint">
      <polygon points={building} />
    </clipPath>
    <g clipPath="url(#footprint)">
      <g transform="translate(1087 271) rotate(45)" stroke="#525252">
        <path d={walls.thin} />
        <path d={walls.thick} strokeWidth="3" />
      </g>
      <path d="M1087 281L898 470L1272 844" />
      <path d="M1095 285L1200 390" strokeWidth="3" />
      <path d="M1253 443v15l130 130" strokeWidth="2" />
      <path d="M1222 562l9-6 12 10 3 11-13 12-11 3-17-17 3-9zM1202 404l16 15-16 16-16-16zM1146 502l14 13-13 13-14-13z" fill="#000" />
    </g>
    <polygon points={building} />
    <path d="M1213 386l45 44-5 7 157 155M1207 392l45 44M1280 480l9-9M1290 490l9-9M1348 551l9-9M1373 574l9-9" />
    <path d="M803 423h18v-13h7v78h-25z" />
    <path d="M924 407l-90 90 75 74 41-40M924 407l22 23" />
    <path d="M1020 601l-17 18 50 50 45 45 18-17M1053 669l14-14M1006 702l39-40 21 21-40 39zM1039 681l-7 8 12 12" />
    <path d="M1038 900h73v6h-14v18h-59zM1416 893h13v-9h14v40h-27zM1430 893v2M1431 907v3M1430 920h4" />
    <path d="M1268 826v19h6v-20M1277 815v26M1285 812v24" />
    {zones.map((zone) => (
      <g key={`${zone.x}-${zone.y}`} transform={`translate(${zone.x} ${zone.y}) scale(.33333)`}>
        <path d={labelDashes([...zone.mains, ...zone.pipes])} stroke="#b4b4b4" strokeWidth="3" />
        <g stroke="#0ff" strokeWidth="3">
          {zone.pipes.map((points) => (
            <polyline key={points} points={points} />
          ))}
        </g>
        <g stroke="#0ff" strokeWidth="5">
          {zone.mains.map((points) => (
            <polyline key={points} points={points} />
          ))}
        </g>
        <g stroke="#f00" strokeWidth="4">
          {zone.red.map((points) => (
            <polyline key={points} points={points} />
          ))}
        </g>
        <g stroke="#ff0" strokeWidth="4">
          {zone.yellow.map((points) => (
            <polyline key={points} points={points} />
          ))}
        </g>
        {zone.nodes.map(([x, y]) => (
          <g key={`${x}-${y}`}>
            <circle cx={x} cy={y} r="8" fill="#999" stroke="#fff" strokeWidth="3" />
            <path d={`M${x - 16} ${y + 10}h13M${x + 3} ${y - 13}h14`} stroke="#fff" strokeWidth="3" />
          </g>
        ))}
        {zone.tags.map(([x, y]) => (
          <rect key={`${x}-${y}`} x={x - 8} y={y - 3} width="16" height="6" stroke="#fff" strokeWidth="3" />
        ))}
      </g>
    ))}
    <path d="M1267 568l-21 22" stroke="#1c7a24" />
    <path d="M1129 600v25" stroke="#ccc" />
  </svg>
);

const NavBar = () => (
  <div className="absolute right-[3px] top-[2px] flex h-[114px] w-8 flex-col items-center rounded-[4px] border border-[#5a5b5c] bg-[#48494a]">
    <svg viewBox="0 0 32 114" className="h-full w-full" fill="none" stroke="#b5b5b5" aria-hidden="true">
      <path d="M24 3l4 4M28 3l-4 4" />
      <path d="M5 29a8 8 0 018-8h8v9a8 8 0 01-16 0z" fill="#9b9c9c" stroke="none" />
      <circle cx="13" cy="29" r="5" stroke="#4b4b4b" />
      <path d="M17 36h4v3h-4v3h5M23 36h4v6h-4z" stroke="#34509a" />
      <path d="M3 56h25" stroke="#333" />
      <path d="M8 66h10v9H8z" fill="#7c837c" stroke="#4f8a50" strokeDasharray="1 2" />
      <circle cx="18" cy="76" r="3" fill="#b5b5b5" stroke="none" />
      <path d="M15 51h1M15 93h1" stroke="#333" />
      <path d="M24 106h4M24 108h4l-2 3z" />
    </svg>
  </div>
);

const viewControls: [string, ReactNode][] = [
  [
    "Detail Level",
    <>
      <path d="M1 2h18v16H1z" fill="#d8d8d8" />
      <path d="M1 6h18M1 10h18M1 14h18M5 2v16M9 2v16M13 2v16M17 2v16" strokeDasharray="2 2" strokeWidth="2" />
    </>,
  ],
  [
    "Visual Style",
    <>
      <path d="M1 7l5-5h13v10l-5 6H1z" fill="#58a8e0" stroke="#1d5f97" />
      <path d="M1 7h13v11M14 7l5-5" stroke="#1d5f97" />
      <path d="M2 6l5-4h11l-4 4z" fill="#e3f2fc" stroke="none" />
      <path d="M3 9h9v7H3z" fill="#bfe0f7" stroke="none" />
    </>,
  ],
  [
    "Sun Path",
    <>
      <circle cx="9" cy="9" r="5" fill="#ffd76b" stroke="#e08b1a" />
      <path d="M9 0v3M0 9h3M3 3l2 2M15 3l-2 2" stroke="#e08b1a" />
      <path d="M12 11l7 8M19 11l-7 8" stroke="#d42a1c" strokeWidth="2" />
    </>,
  ],
  [
    "Shadows",
    <>
      <path d="M1 17h8l4-2" strokeDasharray="2 1" stroke="#999" />
      <path d="M12 10l6 8M18 10l-6 8" stroke="#999" strokeWidth="2" />
    </>,
  ],
  [
    "Crop View",
    <>
      <path d="M4 5h12v10H4z" fill="#9cc8ea" stroke="none" />
      <path d="M4 1v14h15M1 5h14v13" stroke="#2667a8" strokeWidth="2" />
      <path d="M10 8l9 11M19 8l-9 11" stroke="#d42a1c" strokeWidth="2" />
    </>,
  ],
  [
    "Show Crop Region",
    <>
      <path d="M4 5h12v10H4z" fill="#cfe3f3" stroke="none" />
      <path d="M4 1v14h13M1 5h12v13" stroke="#2667a8" strokeWidth="2" />
      <circle cx="16" cy="6" r="3" fill="#bfe3fb" stroke="#2667a8" />
      <path d="M7 9h4v4H7z" fill="#d42a1c" stroke="none" />
    </>,
  ],
  [
    "Temporary Hide",
    <>
      <path d="M1 4l5 6M1 4l4 8M12 3c4 0 6 3 7 8" stroke="#888" />
      <ellipse cx="8" cy="13" rx="4" ry="3" fill="#ddd" />
      <ellipse cx="15" cy="10" rx="4" ry="3" fill="#ddd" />
    </>,
  ],
  [
    "Reveal Hidden",
    <>
      <circle cx="10" cy="7" r="4" fill="#d6ecfb" stroke="#3c86c6" />
      <path d="M10 11v7" strokeWidth="3" />
    </>,
  ],
  [
    "Worksharing Display",
    <>
      <path d="M2 9l4-3 6 2v8l-5 3-5-3z" fill="#b6d9f3" stroke="#1d5f97" />
      <path d="M6 6V2h7v5" stroke="#2f8f3a" strokeWidth="2" />
      <path d="M11 9l8 9M19 9l-8 9" stroke="#d42a1c" strokeWidth="2" />
    </>,
  ],
  [
    "View Properties",
    <>
      <path d="M2 3h13v14H2z" strokeDasharray="3 2" strokeWidth="2" />
      <path d="M9 8h8v10H9z" fill="#ddd" />
      <circle cx="13" cy="13" r="2" />
    </>,
  ],
  [
    "Reveal Constraints",
    <>
      <path d="M1 3h16M3 1v5M15 1v5M3 8v10" strokeDasharray="2 1" />
      <path d="M11 11h7v7h-7z" fill="#555" />
      <path d="M12 11V8h5v3" />
    </>,
  ],
];

const DrawingArea = () => (
  <main className="flex min-w-0 flex-1 flex-col bg-white">
    <div className="flex h-[25px] shrink-0 bg-[#ccc]">
      <div className="flex w-[310px] items-center bg-white pl-[6px] pr-[7px] text-[15px] font-bold text-[#1c1c1c]">
        <svg viewBox="0 0 20 18" className="mr-[9px] h-[18px] w-5 shrink-0" fill="none" stroke="#5a5d60" strokeWidth="1.5" aria-hidden="true">
          <path d="M1 17V3h6V1h6l6 5v11z" fill="#f3f3f3" />
          <path d="M7 4v4H4M7 10v4M11 8h6M11 8v6M13 1v5h6" />
        </svg>
        <span className="flex-1 whitespace-nowrap">DRAINAGEPLAN - BASEMENT 03...</span>
        <button aria-label="Close view">
          <CloseIcon />
        </button>
      </div>
      <button aria-label="View list" className="ml-auto mr-[7px]">
        <svg viewBox="0 0 10 9" className="h-[9px] w-[10px]" fill="#333">
          <path d="M0 0h10v2H0zM0 4h10L5 9z" />
        </svg>
      </button>
    </div>
    <div className="mb-[2px] ml-[2px] mr-[2px] flex min-h-0 flex-1 flex-col border-b border-r border-[#ccc] pt-[2px]">
      <div className="relative flex min-h-0 flex-1 bg-[#f0f1f1]">
        <div className="relative min-w-0 flex-1 bg-black">
          <div className="absolute inset-0">
            <FloorPlan />
          </div>
          <NavBar />
          <p
            className="absolute bottom-4 left-[147px] font-['DejaVu_Sans',sans-serif] text-[64px] font-bold leading-[60px] text-[#4d4e4d]"
            dir="rtl"
            lang="ar"
          >
            مستقل
          </p>
        </div>
        <div className="relative w-[21px]">
          <span className="absolute left-2 top-[49%] h-5 w-[3px] rounded-full bg-[#858585]" />
        </div>
        <p className="pointer-events-none absolute -bottom-6 left-[147px] z-10 text-[37px] font-semibold leading-9 text-[#9a9a9a]/40">
          mostaql.com
        </p>
      </div>
      <div className="relative flex h-[21px] shrink-0 items-center bg-[#f0f1f1] pl-[27px] text-[13px] text-black">
        <span className="w-[65px]">1 : 100</span>
        <div className="flex gap-[5px]">
          {viewControls.map(([name, art]) => (
            <button key={name} aria-label={name}>
              <svg viewBox="0 0 20 20" className="h-5 w-5" fill="none" stroke="#555" strokeWidth="1.5">
                {art}
              </svg>
            </button>
          ))}
        </div>
        <span className="ml-auto mr-[291px] h-[3px] w-[21px] bg-[#858585]" />
        <svg viewBox="0 0 12 12" className="absolute bottom-[2px] right-1 h-3 w-3" fill="#bdbdbd">
          <path d="M9 0h3v3H9zM4 4h3v3H4zM9 4h3v3H9zM0 9h3v3H0zM4 9h3v3H4zM9 9h3v3H9z" />
        </svg>
      </div>
    </div>
  </main>
);

/* ---------- properties ---------- */

type Prop = { label: string; value?: string; kind?: "group" | "check" | "button" | "browse"; dim?: boolean };

const props: Prop[] = [
  { label: "Show Hidden ...", value: "By Discipline" },
  { label: "Default Analys...", value: "None" },
  { label: "Sub-Discipline", kind: "browse" },
  { label: "Sheet Scale", kind: "browse" },
  { label: "Scale", kind: "browse" },
  { label: "Sun Path", kind: "check" },
  { label: "Text", kind: "group" },
  { label: "REF NUM.", kind: "browse" },
  { label: "Extents", kind: "group" },
  { label: "Crop View", kind: "check" },
  { label: "Crop Region V...", kind: "check" },
  { label: "Annotation Cr...", kind: "check" },
  { label: "Far Clip Active", kind: "check" },
  { label: "Far Clip Offset", value: "304800.0", dim: true },
  { label: "Scope Box", value: "None" },
  { label: "Section Box", kind: "check" },
  { label: "Camera", kind: "group" },
  { label: "Rendering Set...", value: "Edit...", kind: "button" },
  { label: "Locked Orient...", kind: "check", dim: true },
  { label: "Projection Mo...", value: "Orthographic" },
  { label: "Eye Elevation", value: "855508.7" },
  { label: "Target Elevati...", value: "653291.5" },
  { label: "Camera Positi...", value: "Adjusting", dim: true },
  { label: "Identity Data", kind: "group" },
  { label: "View Template", value: "<None>", kind: "button" },
];

const PropRow = ({ label, value, kind, dim }: Prop) => {
  const [checked, setChecked] = useState(false);
  const cell = "h-6 border-b border-r border-dotted border-[#666] p-0 pb-[2px] text-left font-normal leading-5";
  const id = `prop-${label.replace(/\W+/g, "-").toLowerCase()}`;

  if (kind === "group") {
    return (
      <tr>
        <th colSpan={3} className="h-6 bg-[#dbdbdb] p-0 text-left font-normal">
          <button className="flex w-full items-center justify-between pl-[2px] pr-[6px]">
            {label}
            <svg viewBox="0 0 7 8" className="mb-2 h-2 w-[7px]" fill="none" stroke="#111">
              <path d="M1 4l2.500-3L6 4M1 8l2.500-3L6 8" />
            </svg>
          </button>
        </th>
      </tr>
    );
  }

  return (
    <tr className={dim ? "text-[#7d7f80]" : "text-black"}>
      <th className={clsx(cell, "whitespace-nowrap pl-[10px]")}>{kind === "check" ? <label htmlFor={id}>{label}</label> : label}</th>
      <td className={clsx(cell, "whitespace-nowrap", kind === "button" ? "px-px" : "pl-[3px]")}>
        {kind === "check" && (
          <input
            id={id}
            type="checkbox"
            checked={checked}
            disabled={dim}
            onChange={() => setChecked(!checked)}
            className="block h-4 w-4 appearance-none rounded-[3px] border border-[#5e5e5e] bg-[#f4f4f4] checked:bg-[#2d7ab6] disabled:border-[#c4c4c4]"
          />
        )}
        {kind === "button" && (
          <button className="block h-[21px] w-full rounded-[3px] border border-b-2 border-[#d0d0d0] bg-[#fdfdfd] leading-[18px]">{value}</button>
        )}
        {!kind && value}
      </td>
      <td className={cell}>
        {kind === "browse" && (
          <button aria-label={`Browse ${label}`} className="mx-px block h-[21px] w-3 rounded-[3px] border border-b-2 border-[#c4c4c4] bg-[#fdfdfd]" />
        )}
      </td>
    </tr>
  );
};

const Properties = () => (
  <aside className="flex w-[273px] shrink-0 flex-col border-l-2 border-[#ccc] bg-[#eee] text-[14px]">
    <div className="flex h-6 shrink-0 items-center justify-between pl-1 pr-[3px] text-[#404040]">
      <h2>Properties</h2>
      <button aria-label="Close properties">
        <CloseIcon />
      </button>
    </div>
    <div className="ml-[2px] flex h-[89px] shrink-0 items-center border-l border-t border-[#ccc] bg-[#f0f1f1] pl-[3px] pr-[1px] text-[#404040]">
      <span className="mr-[5px] flex h-[82px] w-[82px] items-center justify-center border border-[#ccc]">
        <svg viewBox="0 0 40 40" className="h-10 w-10" fill="none" stroke="#55585d" strokeWidth="1.5" aria-hidden="true">
          <path d="M4 17v13l16 8V22L12 9z" fill="#fff" />
          <path d="M20 22l16-6v14l-16 8z" fill="#d3d4d6" />
          <path d="M2 16L12 6l13-4 13 12-17 8-9-10-8 8z" fill="#e6e7e8" />
          <path d="M9 23l5 2v10l-5-2z" fill="#444" stroke="none" />
        </svg>
      </span>
      3D View
      <button aria-label="Type selector" className="ml-auto">
        <Caret className="text-[#333]" />
      </button>
    </div>
    <div className="ml-[3px] flex h-[29px] shrink-0 items-center">
      <div className="relative h-[27px] w-[174px]">
        <select
          aria-label="View"
          defaultValue="3D"
          className="h-full w-full appearance-none rounded-[2px] border border-[#ccc] bg-[#fdfdfd] pl-[3px] pr-7 text-black"
        >
          <option value="3D">3D View: {"{3D - MOSTAFA}"}</option>
        </select>
        <svg viewBox="0 0 10 6" className="pointer-events-none absolute right-[6px] top-[11px] h-[6px] w-[10px]" fill="none" stroke="#444">
          <path d="M0 0l5 5 5-5" />
        </svg>
      </div>
      <button className="ml-[5px] flex items-center gap-1 whitespace-nowrap pb-[3px] text-[#333]">
        <svg viewBox="0 0 18 18" className="h-[18px] w-[18px]" fill="none" stroke="#444" strokeWidth="1.5">
          <path d="M1 3l2-2h5v6l-1 1H1zM10 1h6v6h-7V2zM1 11h7v5l-1 1H1z" fill="#f8f8f8" />
          <path d="M10 9h7v8h-7z" fill="#fff" />
          <path d="M12 11h3M12 13h3M12 15h3" stroke="#2b7fd4" />
        </svg>
        Edit Type
      </button>
    </div>
    <div className="ml-[2px] flex min-h-0 flex-1 overflow-hidden">
      <table className="h-[600px] flex-1 table-fixed border-separate border-spacing-0 bg-white">
        <colgroup>
          <col className="w-[117px]" />
          <col />
          <col className="w-[15px]" />
        </colgroup>
        <tbody>
          {props.map((prop) => (
            <PropRow key={prop.label} {...prop} />
          ))}
        </tbody>
      </table>
      <div className="relative w-5 shrink-0 bg-[#f0f1f1]">
        <span className="absolute left-[9px] top-[28%] h-[46%] w-[3px] rounded-full bg-[#858585]" />
      </div>
    </div>
    <div className="flex h-[33px] shrink-0 items-start justify-between pl-1 pr-[2px]">
      <a href="#help" className="mt-[2px] text-[#1467b3] underline">
        Properties help
      </a>
      <button disabled className="mt-[3px] h-6 w-[84px] rounded-[3px] bg-[#f6f6f6] text-[#8b8b84]">
        Apply
      </button>
    </div>
  </aside>
);

/* ---------- status bar ---------- */

const S = ({ children }: { children: ReactNode }) => (
  <svg viewBox="0 0 20 20" className="h-5 w-5 shrink-0" fill="none" stroke="#444" strokeWidth="1.5" aria-hidden="true">
    {children}
  </svg>
);

const RedX = () => <path d="M12 1l7 8M19 1l-7 8" stroke="#c3211b" strokeWidth="3" />;
const Pointer = () => <path d="M13 8v11l3-3h4z" fill="#fff" stroke="#333" strokeWidth="1" />;

const selectToggles: [string, ReactNode][] = [
  ["Select links", <path d="M2 4h9v5H2zM8 7v9" stroke="#c87a24" strokeWidth="2" />],
  ["Select underlay", <path d="M1 14L10 3l2 11zM1 9h12" stroke="#3577b8" fill="#cfe5f6" />],
  ["Select pinned", <path d="M3 2h9v3H3zM5 5h5v6H5zM2 11h11v4H2z" stroke="#b86f1c" fill="#f2b45e" />],
  ["Select by face", <path d="M2 4l8-3v16l-8 2z" stroke="#3577b8" fill="#8cc1ea" />],
  ["Drag on selection", <path d="M8 1v14M1 8h14M6 3l2-2 2 2M3 6L1 8l2 2" />],
];

const StatusBar = () => (
  <footer className="flex h-[22px] shrink-0 items-start overflow-hidden bg-[#ccc] pt-[5px] text-[14px]">
    <span className="w-[689px] shrink-0 pl-[2px] leading-6 text-[#222]">Ready</span>
    <S>
      <path d="M1 9l5-2 6 2v9H1z" fill="#4c9ad8" stroke="#1d5f97" />
      <path d="M6 6V2h7v6" stroke="#2f8f3a" />
      <path d="M15 8v9M18 8v9M14 8h5" stroke="#33406a" />
    </S>
    <div className="relative ml-2 h-[22px] w-[255px] shrink-0">
      <select aria-label="Active workset" className="h-full w-full appearance-none bg-white pl-[3px] leading-[22px] text-black">
        <option>PL-Plumbing Fixtures</option>
      </select>
      <svg viewBox="0 0 10 6" className="pointer-events-none absolute right-1 top-2 h-[6px] w-[10px]" fill="none" stroke="#444">
        <path d="M0 0l5 5 5-5" />
      </svg>
    </div>
    <span className="ml-[9px] flex">
      <S>
        <path d="M5 2h12v6H8l-3 4H1" fill="#eee" />
      </S>
    </span>
    <span className="w-[39px] pl-1 leading-6">:0</span>
    <S>
      <path d="M2 2h16v16H2z" fill="#eee" />
      <path d="M2 5h16M5 9h5M5 12h10M5 15h8" strokeWidth="2" />
    </S>
    <span className="ml-[10px] flex">
      <S>
        <path d="M1 2h18v17H1z" fill="#a9adb2" stroke="none" />
        <path d="M3 14l5-5 4 3 5-6" stroke="#8a8e94" />
      </S>
    </span>
    <div className="relative ml-[7px] h-[22px] w-[256px] shrink-0">
      <select aria-label="Design option" disabled className="h-full w-full appearance-none bg-[#fafafa] pl-[2px] leading-[22px] text-[#8d8d8d] opacity-100">
        <option>Main Model</option>
      </select>
      <svg viewBox="0 0 10 6" className="pointer-events-none absolute right-1 top-2 h-[6px] w-[10px]" fill="none" stroke="#999">
        <path d="M0 0l5 5 5-5" />
      </svg>
    </div>
    <div className="ml-auto mr-[75px] flex gap-[10px]">
      {selectToggles.map(([name, art]) => (
        <button key={name} aria-label={name}>
          <S>
            {art}
            <RedX />
            <Pointer />
          </S>
        </button>
      ))}
      <S>
        <circle cx="10" cy="10" r="7" stroke="#a2a2a2" strokeWidth="4" strokeDasharray="3 2" />
      </S>
      <button className="flex items-start">
        <S>
          <path d="M1 3h18l-7 8v9H8v-9z" fill="#e3e3e3" />
        </S>
        <span className="leading-6">:0</span>
      </button>
    </div>
  </footer>
);

const App = () => (
  <div className="flex h-screen w-full flex-col overflow-hidden bg-[#eee] font-['Open_Sans','Noto_Sans',sans-serif]">
    <Defs />
    <TitleBar />
    <Tabs />
    <Ribbon />
    <div className="h-[35px] shrink-0 border-b-2 border-[#ccc] bg-[#eee]" />
    <div className="flex min-h-0 flex-1">
      <ProjectBrowser />
      <DrawingArea />
      <Properties />
    </div>
    <StatusBar />
  </div>
);

export default App;
